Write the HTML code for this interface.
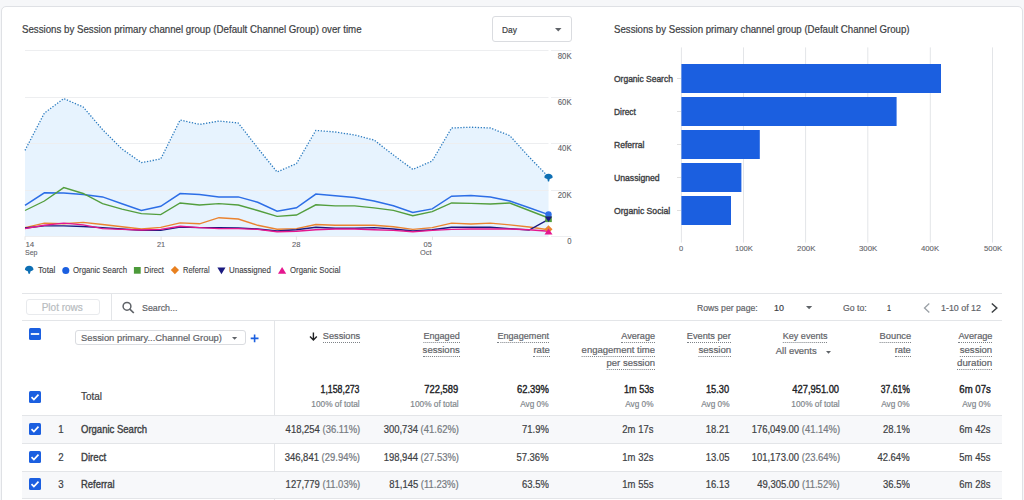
<!DOCTYPE html>
<html><head><meta charset="utf-8"><style>
html,body{margin:0;padding:0;width:1024px;height:500px;overflow:hidden;background:#f6f7f9;}
.t{position:absolute;white-space:nowrap;line-height:1;font-family:"Liberation Sans", sans-serif;-webkit-text-stroke:0.2px currentColor;}
.u{padding-bottom:1px;border-bottom:1px dotted #7d8287;}
</style></head><body>
<div style="position:absolute;left:1px;top:6px;width:1022px;height:514px;box-sizing:border-box;border:1px solid #dfe1e5;border-radius:5px;background:#fff;"></div><div class="t" style="left:21.70px;top:25.00px;font-size:10.2px;color:#3c4043;font-weight:400;transform:scaleX(0.9518);transform-origin:left 0;">Sessions by Session primary channel group (Default Channel Group) over time</div><div style="position:absolute;left:491.5px;top:16.3px;width:80.29999999999995px;height:26.2px;box-sizing:border-box;border:1px solid #dadce0;border-radius:3px;"></div><div class="t" style="left:502.00px;top:26.00px;font-size:9.1px;color:#3c4043;font-weight:400;transform:scaleX(0.9176);transform-origin:left 0;">Day</div><svg style="position:absolute;left:554.5px;top:27.8px" width="7" height="4"><path d="M0 0L6.5 0L3.25 3.6Z" fill="#5f6368"/></svg><svg style="position:absolute;left:0;top:0" width="1024" height="300"><polygon points="25.00,150.40 44.39,113.00 63.78,98.60 83.17,107.00 102.56,129.60 121.95,149.00 141.34,162.60 160.73,159.00 180.12,120.00 199.51,124.40 218.90,121.00 238.29,123.00 257.68,148.00 277.07,172.00 296.46,163.60 315.85,130.40 335.24,132.00 354.63,135.00 374.02,140.00 393.41,155.00 412.80,169.40 432.19,161.00 451.58,128.00 470.97,127.20 490.36,128.00 509.75,135.60 529.14,157.00 548.53,177.00 548.53,236.50 25.00,236.50" fill="#e7f3fe"/><line x1="25" y1="50.5" x2="548.5" y2="50.5" stroke="#edeef0" stroke-width="1"/><line x1="551" y1="50.5" x2="571.3" y2="50.5" stroke="#edeef0" stroke-width="1"/><line x1="25" y1="97.5" x2="548.5" y2="97.5" stroke="#edeef0" stroke-width="1"/><line x1="551" y1="97.5" x2="571.3" y2="97.5" stroke="#edeef0" stroke-width="1"/><line x1="25" y1="143.5" x2="548.5" y2="143.5" stroke="#edeef0" stroke-width="1"/><line x1="551" y1="143.5" x2="571.3" y2="143.5" stroke="#edeef0" stroke-width="1"/><line x1="25" y1="190.5" x2="548.5" y2="190.5" stroke="#edeef0" stroke-width="1"/><line x1="551" y1="190.5" x2="571.3" y2="190.5" stroke="#edeef0" stroke-width="1"/><line x1="25" y1="236.5" x2="548.5" y2="236.5" stroke="#edeef0" stroke-width="1"/><line x1="551" y1="236.5" x2="571.3" y2="236.5" stroke="#edeef0" stroke-width="1"/><line x1="25" y1="236.4" x2="25" y2="240" stroke="#e0e0e0" stroke-width="0.8"/><line x1="161.1" y1="236.4" x2="161.1" y2="240" stroke="#e0e0e0" stroke-width="0.8"/><line x1="296.4" y1="236.4" x2="296.4" y2="240" stroke="#e0e0e0" stroke-width="0.8"/><line x1="432.5" y1="236.4" x2="432.5" y2="240" stroke="#e0e0e0" stroke-width="0.8"/><polyline points="25.00,205.40 44.39,192.80 63.78,193.00 83.17,194.60 102.56,196.90 121.95,203.70 141.34,210.50 160.73,206.30 180.12,193.50 199.51,194.40 218.90,196.90 238.29,196.90 257.68,202.30 277.07,211.20 296.46,207.80 315.85,194.10 335.24,195.80 354.63,197.60 374.02,201.00 393.41,205.80 412.80,212.40 432.19,208.90 451.58,196.20 470.97,195.50 490.36,196.90 509.75,201.00 529.14,207.80 548.53,214.60" fill="none" stroke="#2d6ee6" stroke-width="1.5"/><polyline points="25.00,210.50 44.39,201.00 63.78,187.60 83.17,193.50 102.56,203.70 121.95,209.20 141.34,213.70 160.73,214.60 180.12,203.00 199.51,205.00 218.90,203.70 238.29,205.00 257.68,210.50 277.07,216.30 296.46,215.00 315.85,204.80 335.24,205.80 354.63,205.80 374.02,207.80 393.41,210.30 412.80,215.70 432.19,211.60 451.58,203.00 470.97,203.30 490.36,204.00 509.75,203.00 529.14,210.50 548.53,218.00" fill="none" stroke="#539e3e" stroke-width="1.35"/><polyline points="25.00,227.60 44.39,223.10 63.78,223.80 83.17,222.40 102.56,224.50 121.95,226.70 141.34,229.00 160.73,227.40 180.12,222.90 199.51,223.80 218.90,217.70 238.29,219.00 257.68,225.30 277.07,229.30 296.46,228.60 315.85,224.50 335.24,225.30 354.63,225.30 374.02,225.30 393.41,226.70 412.80,229.40 432.19,227.60 451.58,223.10 470.97,224.00 490.36,223.10 509.75,224.90 529.14,227.00 548.53,229.70" fill="none" stroke="#ea8330" stroke-width="1.4"/><polyline points="25.00,228.00 44.39,225.90 63.78,225.90 83.17,226.50 102.56,227.60 121.95,229.00 141.34,230.40 160.73,230.40 180.12,227.00 199.51,227.60 218.90,227.60 238.29,228.00 257.68,229.00 277.07,231.00 296.46,229.70 315.85,227.20 335.24,228.30 354.63,228.30 374.02,227.60 393.41,229.00 412.80,231.00 432.19,229.70 451.58,227.20 470.97,227.20 490.36,227.20 509.75,228.60 529.14,230.00 548.53,219.40" fill="none" stroke="#1b1a7e" stroke-width="1.4"/><polyline points="25.00,228.60 44.39,225.30 63.78,223.10 83.17,224.90 102.56,228.60 121.95,229.40 141.34,230.00 160.73,229.40 180.12,226.30 199.51,227.60 218.90,228.60 238.29,228.60 257.68,229.40 277.07,231.70 296.46,231.30 315.85,229.70 335.24,229.00 354.63,229.00 374.02,229.70 393.41,230.40 412.80,231.70 432.19,230.40 451.58,229.40 470.97,229.00 490.36,229.00 509.75,229.00 529.14,229.70 548.53,231.30" fill="none" stroke="#e5178f" stroke-width="1.4"/><polyline points="25.00,150.40 44.39,113.00 63.78,98.60 83.17,107.00 102.56,129.60 121.95,149.00 141.34,162.60 160.73,159.00 180.12,120.00 199.51,124.40 218.90,121.00 238.29,123.00 257.68,148.00 277.07,172.00 296.46,163.60 315.85,130.40 335.24,132.00 354.63,135.00 374.02,140.00 393.41,155.00 412.80,169.40 432.19,161.00 451.58,128.00 470.97,127.20 490.36,128.00 509.75,135.60 529.14,157.00 548.53,177.00" fill="none" stroke="#2b7bbf" stroke-width="1.3" stroke-dasharray="1.3 1.6"/><path d="M544.3299999999999,177.6 C544.3299999999999,175 546.3299999999999,173.8 548.53,173.8 C550.73,173.8 552.73,175 552.73,177.6 Q551.3299999999999,178.6 549.73,179.1 L549.13,181.4 L547.93,181.4 L547.3299999999999,179.1 Q545.73,178.6 544.3299999999999,177.6Z" fill="#0e6fb4"/><circle cx="548.53" cy="214.5" r="3.2" fill="#2d6ee6"/><rect x="545.23" y="216.5" width="6.6" height="5.6" fill="#539e3e"/><path d="M544.93,216.5 L552.13,216.5 L548.53,222 Z" fill="#1b1a7e"/><path d="M548.53,225.2 L552.53,229.2 L548.53,233.2 L544.53,229.2 Z" fill="#ea8330"/><path d="M548.53,228.6 L552.53,234.4 L544.53,234.4 Z" fill="#e5178f"/></svg><div class="t" style="right:452.40px;top:53.00px;font-size:8.2px;color:#5f6368;font-weight:400;-webkit-text-stroke:0.1px currentColor;transform:scaleX(0.9467);transform-origin:right 0;">80K</div><div class="t" style="right:452.40px;top:99.00px;font-size:8.2px;color:#5f6368;font-weight:400;-webkit-text-stroke:0.1px currentColor;transform:scaleX(0.9467);transform-origin:right 0;">60K</div><div class="t" style="right:452.40px;top:145.00px;font-size:8.2px;color:#5f6368;font-weight:400;-webkit-text-stroke:0.1px currentColor;transform:scaleX(0.9467);transform-origin:right 0;">40K</div><div class="t" style="right:452.40px;top:192.00px;font-size:8.2px;color:#5f6368;font-weight:400;-webkit-text-stroke:0.1px currentColor;transform:scaleX(0.9467);transform-origin:right 0;">20K</div><div class="t" style="right:452.41px;top:238.00px;font-size:8.2px;color:#5f6368;font-weight:400;-webkit-text-stroke:0.1px currentColor;transform:scaleX(0.9400);transform-origin:right 0;">0</div><div class="t" style="left:25.40px;top:241.00px;font-size:8.0px;color:#5f6368;font-weight:400;-webkit-text-stroke:0.1px currentColor;">14</div><div class="t" style="left:25.40px;top:249.00px;font-size:8.0px;color:#5f6368;font-weight:400;-webkit-text-stroke:0.1px currentColor;transform:scaleX(0.8800);transform-origin:left 0;">Sep</div><div class="t" style="left:156.95px;top:241.00px;font-size:8.0px;color:#5f6368;font-weight:400;-webkit-text-stroke:0.1px currentColor;transform:scaleX(0.9222);transform-origin:left 0;">21</div><div class="t" style="left:292.20px;top:241.00px;font-size:8.0px;color:#5f6368;font-weight:400;-webkit-text-stroke:0.1px currentColor;transform:scaleX(0.9333);transform-origin:left 0;">28</div><div class="t" style="right:591.99px;top:241.00px;font-size:8.0px;color:#5f6368;font-weight:400;-webkit-text-stroke:0.1px currentColor;transform:scaleX(0.9333);transform-origin:right 0;">05</div><div class="t" style="right:592.40px;top:249.00px;font-size:8.0px;color:#5f6368;font-weight:400;-webkit-text-stroke:0.1px currentColor;transform:scaleX(0.9231);transform-origin:right 0;">Oct</div><svg style="position:absolute;left:0;top:260px" width="300" height="20"><path d="M24.9,9.8 C24.9,7 27,5.8 29.2,5.8 C31.4,5.8 33.5,7 33.5,9.8 Q32,10.8 30.6,11.3 L29.9,13.8 L28.5,13.8 L27.8,11.3 Q26.4,10.8 24.9,9.8Z" fill="#0e6fb4"/><circle cx="65.8" cy="10.45" r="3.55" fill="#1b5fe0"/><rect x="133.9" y="7" width="6.8" height="6.7" fill="#4c9a3a"/><path d="M174.9,5.9 L179,10.05 L174.9,14.2 L170.8,10.05Z" fill="#e8801f"/><path d="M217.4,7.4 L225.5,7.4 L221.45,14.2Z" fill="#1a1a80"/><path d="M282.1,6.9 L286.2,13.75 L278,13.75Z" fill="#e5178f"/></svg><div class="t" style="left:37.50px;top:266.00px;font-size:8.5px;color:#3c4043;font-weight:400;-webkit-text-stroke:0.1px currentColor;transform:scaleX(0.9667);transform-origin:left 0;">Total</div><div class="t" style="left:73.00px;top:266.00px;font-size:8.5px;color:#3c4043;font-weight:400;-webkit-text-stroke:0.1px currentColor;transform:scaleX(0.9153);transform-origin:left 0;">Organic Search</div><div class="t" style="left:144.10px;top:266.00px;font-size:8.5px;color:#3c4043;font-weight:400;-webkit-text-stroke:0.1px currentColor;transform:scaleX(0.8913);transform-origin:left 0;">Direct</div><div class="t" style="left:182.70px;top:266.00px;font-size:8.5px;color:#3c4043;font-weight:400;-webkit-text-stroke:0.1px currentColor;transform:scaleX(0.8806);transform-origin:left 0;">Referral</div><div class="t" style="left:229.00px;top:266.00px;font-size:8.5px;color:#3c4043;font-weight:400;-webkit-text-stroke:0.1px currentColor;transform:scaleX(0.9333);transform-origin:left 0;">Unassigned</div><div class="t" style="left:289.80px;top:266.00px;font-size:8.5px;color:#3c4043;font-weight:400;-webkit-text-stroke:0.1px currentColor;transform:scaleX(0.9143);transform-origin:left 0;">Organic Social</div><div class="t" style="left:613.80px;top:25.00px;font-size:10.2px;color:#3c4043;font-weight:400;transform:scaleX(0.9471);transform-origin:left 0;">Sessions by Session primary channel group (Default Channel Group)</div><svg style="position:absolute;left:0;top:0" width="1024" height="300"><line x1="681.4" y1="47.4" x2="681.4" y2="242.6" stroke="#e3e5e8" stroke-width="1"/><line x1="743.5" y1="47.4" x2="743.5" y2="242.6" stroke="#e3e5e8" stroke-width="1"/><line x1="805.6" y1="47.4" x2="805.6" y2="242.6" stroke="#e3e5e8" stroke-width="1"/><line x1="867.8" y1="47.4" x2="867.8" y2="242.6" stroke="#e3e5e8" stroke-width="1"/><line x1="930.3" y1="47.4" x2="930.3" y2="242.6" stroke="#e3e5e8" stroke-width="1"/><line x1="992.5" y1="47.4" x2="992.5" y2="242.6" stroke="#e3e5e8" stroke-width="1"/><rect x="681.4" y="64" width="259.6" height="29" fill="#1b5fe0"/><line x1="677" y1="78.5" x2="681" y2="78.5" stroke="#e0e0e0" stroke-width="1"/><rect x="681.4" y="97" width="215.2" height="29" fill="#1b5fe0"/><line x1="677" y1="111.5" x2="681" y2="111.5" stroke="#e0e0e0" stroke-width="1"/><rect x="681.4" y="130" width="78.4" height="29" fill="#1b5fe0"/><line x1="677" y1="144.5" x2="681" y2="144.5" stroke="#e0e0e0" stroke-width="1"/><rect x="681.4" y="163" width="60.0" height="29" fill="#1b5fe0"/><line x1="677" y1="177.5" x2="681" y2="177.5" stroke="#e0e0e0" stroke-width="1"/><rect x="681.4" y="196" width="49.6" height="29" fill="#1b5fe0"/><line x1="677" y1="210.5" x2="681" y2="210.5" stroke="#e0e0e0" stroke-width="1"/></svg><div class="t" style="left:613.80px;top:75.00px;font-size:8.9px;color:#3c4043;font-weight:400;-webkit-text-stroke:0.36px currentColor;transform:scaleX(0.9548);transform-origin:left 0;">Organic Search</div><div class="t" style="left:613.80px;top:108.00px;font-size:8.9px;color:#3c4043;font-weight:400;-webkit-text-stroke:0.36px currentColor;transform:scaleX(0.9417);transform-origin:left 0;">Direct</div><div class="t" style="left:613.80px;top:141.00px;font-size:8.9px;color:#3c4043;font-weight:400;-webkit-text-stroke:0.36px currentColor;transform:scaleX(0.9625);transform-origin:left 0;">Referral</div><div class="t" style="left:613.80px;top:174.00px;font-size:8.9px;color:#3c4043;font-weight:400;-webkit-text-stroke:0.36px currentColor;transform:scaleX(0.9745);transform-origin:left 0;">Unassigned</div><div class="t" style="left:613.80px;top:207.00px;font-size:8.9px;color:#3c4043;font-weight:400;-webkit-text-stroke:0.36px currentColor;transform:scaleX(0.9724);transform-origin:left 0;">Organic Social</div><div class="t" style="left:679.35px;top:245.00px;font-size:8.0px;color:#5f6368;font-weight:400;-webkit-text-stroke:0.1px currentColor;transform:scaleX(0.9400);transform-origin:left 0;">0</div><div class="t" style="left:734.65px;top:245.00px;font-size:8.0px;color:#5f6368;font-weight:400;-webkit-text-stroke:0.1px currentColor;transform:scaleX(0.9632);transform-origin:left 0;">100K</div><div class="t" style="left:796.55px;top:245.00px;font-size:8.0px;color:#5f6368;font-weight:400;-webkit-text-stroke:0.1px currentColor;transform:scaleX(0.9842);transform-origin:left 0;">200K</div><div class="t" style="left:858.80px;top:245.00px;font-size:8.0px;color:#5f6368;font-weight:400;-webkit-text-stroke:0.1px currentColor;transform:scaleX(0.9789);transform-origin:left 0;">300K</div><div class="t" style="left:921.40px;top:245.00px;font-size:8.0px;color:#5f6368;font-weight:400;-webkit-text-stroke:0.1px currentColor;transform:scaleX(0.9684);transform-origin:left 0;">400K</div><div class="t" style="left:983.55px;top:245.00px;font-size:8.0px;color:#5f6368;font-weight:400;-webkit-text-stroke:0.1px currentColor;transform:scaleX(0.9737);transform-origin:left 0;">500K</div><div style="position:absolute;left:21.5px;top:293px;width:980.5px;height:1px;background:#e3e5e8;"></div><div style="position:absolute;left:21.5px;top:320px;width:980.5px;height:1px;background:#e3e5e8;"></div><div style="position:absolute;left:110.5px;top:293px;width:1.0px;height:27px;background:#e3e5e8;"></div><div style="position:absolute;left:25.5px;top:299.4px;width:74.2px;height:16.0px;box-sizing:border-box;border:1px solid #e8eaed;border-radius:3px;"></div><div class="t" style="left:41.70px;top:303.00px;font-size:10.0px;color:#b8bcc0;font-weight:400;">Plot rows</div><svg style="position:absolute;left:121px;top:301px" width="15" height="13"><circle cx="6" cy="5.3" r="3.9" fill="none" stroke="#5f6368" stroke-width="1.5"/><line x1="8.8" y1="8.2" x2="12.8" y2="12" stroke="#5f6368" stroke-width="1.7"/></svg><div class="t" style="left:142.00px;top:303.00px;font-size:9.6px;color:#5f6368;font-weight:400;transform:scaleX(0.9211);transform-origin:left 0;">Search...</div><div class="t" style="left:696.70px;top:304.00px;font-size:9.3px;color:#5f6368;font-weight:400;transform:scaleX(0.9323);transform-origin:left 0;">Rows per page:</div><div class="t" style="left:774.00px;top:303.00px;font-size:9.6px;color:#3c4043;font-weight:400;transform:scaleX(0.9273);transform-origin:left 0;">10</div><svg style="position:absolute;left:806px;top:306px" width="7" height="4"><path d="M0 0L6.2 0L3.1 3.2Z" fill="#5f6368"/></svg><div class="t" style="left:842.60px;top:304.00px;font-size:9.3px;color:#5f6368;font-weight:400;transform:scaleX(0.9360);transform-origin:left 0;">Go to:</div><div class="t" style="left:886.60px;top:303.00px;font-size:9.6px;color:#3c4043;font-weight:400;transform:scaleX(0.7600);transform-origin:left 0;">1</div><svg style="position:absolute;left:920px;top:302px" width="82" height="12"><path d="M9.3,1.5 L4.5,6 L9.3,10.5" fill="none" stroke="#9aa0a6" stroke-width="1.3"/><path d="M71.8,1.5 L76.8,6 L71.8,10.5" fill="none" stroke="#3c4043" stroke-width="1.5"/></svg><div class="t" style="left:940.50px;top:304.00px;font-size:9.3px;color:#5f6368;font-weight:400;transform:scaleX(0.9548);transform-origin:left 0;">1-10 of 12</div><div style="position:absolute;left:274px;top:320px;width:1px;height:180px;background:#e3e5e8;"></div><div style="position:absolute;left:21.5px;top:415.4px;width:980.5px;height:27.900000000000034px;background:#f7f8fa;"></div><div style="position:absolute;left:21.5px;top:470.7px;width:980.5px;height:27.5px;background:#f7f8fa;"></div><div style="position:absolute;left:21.5px;top:415.4px;width:980.5px;height:1.0px;background:#e3e5e8;"></div><div style="position:absolute;left:21.5px;top:443.3px;width:980.5px;height:1.0px;background:#e3e5e8;"></div><div style="position:absolute;left:21.5px;top:470.7px;width:980.5px;height:1.0px;background:#e3e5e8;"></div><div style="position:absolute;left:21.5px;top:498.2px;width:980.5px;height:1.0px;background:#e3e5e8;"></div><svg style="position:absolute;left:29px;top:328.4px" width="12" height="12"><rect x="0" y="0" width="12" height="12" rx="1.5" fill="#1b5fe0"/><rect x="1.8" y="5.1" width="8.4" height="1.8" fill="#fff"/></svg><div style="position:absolute;left:74.6px;top:330.2px;width:171.4px;height:15.199999999999989px;box-sizing:border-box;border:1px solid #dadce0;border-radius:3px;"></div><div class="t" style="left:81.00px;top:333.00px;font-size:9.6px;color:#5f6368;font-weight:400;transform:scaleX(0.9766);transform-origin:left 0;">Session primary...Channel Group)</div><svg style="position:absolute;left:231.5px;top:336.5px" width="6" height="4"><path d="M0 0L5.2 0L2.6 2.8Z" fill="#5f6368"/></svg><svg style="position:absolute;left:250px;top:333.5px" width="10" height="9"><path d="M4.6,0.5 V8.3 M0.7,4.4 H8.5" stroke="#1b5fe0" stroke-width="1.6"/></svg><div class="t" style="right:663.92px;top:332.00px;font-size:9.2px;color:#5f6368;font-weight:400;"><span class="u">Sessions</span></div><svg style="position:absolute;left:309px;top:331.5px" width="9" height="9"><path d="M4.4,0.5 V7.8 M1,4.6 L4.4,8 L7.8,4.6" fill="none" stroke="#202124" stroke-width="1.4"/></svg><div class="t" style="right:564.40px;top:332.00px;font-size:9.2px;color:#5f6368;font-weight:400;transform:scaleX(0.9892);transform-origin:right 0;"><span class="u">Engaged</span></div><div class="t" style="right:564.46px;top:346.00px;font-size:9.2px;color:#5f6368;font-weight:400;transform:scaleX(1.0389);transform-origin:right 0;"><span class="u">sessions</span></div><div class="t" style="right:475.08px;top:332.00px;font-size:9.2px;color:#5f6368;font-weight:400;transform:scaleX(0.9925);transform-origin:right 0;"><span class="u">Engagement</span></div><div class="t" style="right:474.36px;top:346.00px;font-size:9.2px;color:#5f6368;font-weight:400;transform:scaleX(1.0375);transform-origin:right 0;"><span class="u">rate</span></div><div class="t" style="right:368.74px;top:332.00px;font-size:9.2px;color:#5f6368;font-weight:400;transform:scaleX(0.9941);transform-origin:right 0;"><span class="u">Average</span></div><div class="t" style="right:368.80px;top:346.00px;font-size:9.2px;color:#5f6368;font-weight:400;transform:scaleX(1.0338);transform-origin:right 0;"><span class="u">engagement time</span></div><div class="t" style="right:368.82px;top:359.00px;font-size:9.2px;color:#5f6368;font-weight:400;transform:scaleX(1.0298);transform-origin:right 0;"><span class="u">per session</span></div><div class="t" style="right:293.28px;top:332.00px;font-size:9.2px;color:#5f6368;font-weight:400;"><span class="u">Events per</span></div><div class="t" style="right:293.04px;top:346.00px;font-size:9.2px;color:#5f6368;font-weight:400;transform:scaleX(1.0516);transform-origin:right 0;"><span class="u">session</span></div><div class="t" style="right:196.14px;top:332.00px;font-size:9.2px;color:#5f6368;font-weight:400;transform:scaleX(0.9826);transform-origin:right 0;"><span class="u">Key events</span></div><div class="t" style="right:207.75px;top:346.00px;font-size:9.4px;color:#5f6368;font-weight:400;transform:scaleX(1.0049);transform-origin:right 0;">All events</div><svg style="position:absolute;left:826.3px;top:351px" width="6" height="4"><path d="M0 0L5 0L2.5 2.8Z" fill="#5f6368"/></svg><div class="t" style="right:113.03px;top:332.00px;font-size:9.2px;color:#5f6368;font-weight:400;transform:scaleX(1.0129);transform-origin:right 0;"><span class="u">Bounce</span></div><div class="t" style="right:113.36px;top:346.00px;font-size:9.2px;color:#5f6368;font-weight:400;transform:scaleX(1.0200);transform-origin:right 0;"><span class="u">rate</span></div><div class="t" style="right:31.54px;top:332.00px;font-size:9.2px;color:#5f6368;font-weight:400;"><span class="u">Average</span></div><div class="t" style="right:31.44px;top:346.00px;font-size:9.2px;color:#5f6368;font-weight:400;transform:scaleX(1.0387);transform-origin:right 0;"><span class="u">session</span></div><div class="t" style="right:31.38px;top:359.00px;font-size:9.2px;color:#5f6368;font-weight:400;transform:scaleX(1.0606);transform-origin:right 0;"><span class="u">duration</span></div><svg style="position:absolute;left:29px;top:390.6px" width="12" height="12"><rect x="0" y="0" width="12" height="12" rx="1.5" fill="#1b5fe0"/><path d="M2.5,6.1 L4.9,8.5 L9.5,3.7" fill="none" stroke="#fff" stroke-width="1.7"/></svg><div class="t" style="left:81.00px;top:392.00px;font-size:10.2px;color:#3c4043;font-weight:400;transform:scaleX(0.9773);transform-origin:left 0;">Total</div><div class="t" style="right:664.44px;top:385.00px;font-size:10.0px;color:#202124;font-weight:400;-webkit-text-stroke:0.36px currentColor;transform:scaleX(0.8756);transform-origin:right 0;">1,158,273</div><div class="t" style="right:664.32px;top:400.00px;font-size:9.2px;color:#80868b;font-weight:400;transform:scaleX(0.9000);transform-origin:right 0;">100% of total</div><div class="t" style="right:565.79px;top:385.00px;font-size:10.0px;color:#202124;font-weight:400;-webkit-text-stroke:0.36px currentColor;transform:scaleX(0.9351);transform-origin:right 0;">722,589</div><div class="t" style="right:565.32px;top:400.00px;font-size:9.2px;color:#80868b;font-weight:400;transform:scaleX(0.9000);transform-origin:right 0;">100% of total</div><div class="t" style="right:475.07px;top:385.00px;font-size:10.0px;color:#202124;font-weight:400;-webkit-text-stroke:0.36px currentColor;transform:scaleX(0.9412);transform-origin:right 0;">62.39%</div><div class="t" style="right:475.45px;top:400.00px;font-size:9.2px;color:#80868b;font-weight:400;transform:scaleX(0.9000);transform-origin:right 0;">Avg 0%</div><div class="t" style="right:369.78px;top:385.00px;font-size:10.0px;color:#202124;font-weight:400;-webkit-text-stroke:0.36px currentColor;transform:scaleX(0.9091);transform-origin:right 0;">1m 53s</div><div class="t" style="right:370.05px;top:400.00px;font-size:9.2px;color:#80868b;font-weight:400;transform:scaleX(0.9000);transform-origin:right 0;">Avg 0%</div><div class="t" style="right:294.89px;top:385.00px;font-size:10.0px;color:#202124;font-weight:400;-webkit-text-stroke:0.36px currentColor;transform:scaleX(0.9231);transform-origin:right 0;">15.30</div><div class="t" style="right:294.45px;top:400.00px;font-size:9.2px;color:#80868b;font-weight:400;transform:scaleX(0.9000);transform-origin:right 0;">Avg 0%</div><div class="t" style="right:185.08px;top:385.00px;font-size:10.0px;color:#202124;font-weight:400;-webkit-text-stroke:0.36px currentColor;transform:scaleX(0.9333);transform-origin:right 0;">427,951.00</div><div class="t" style="right:184.52px;top:400.00px;font-size:9.2px;color:#80868b;font-weight:400;transform:scaleX(0.9000);transform-origin:right 0;">100% of total</div><div class="t" style="right:114.07px;top:385.00px;font-size:10.0px;color:#202124;font-weight:400;-webkit-text-stroke:0.36px currentColor;transform:scaleX(0.8588);transform-origin:right 0;">37.61%</div><div class="t" style="right:114.45px;top:400.00px;font-size:9.2px;color:#80868b;font-weight:400;transform:scaleX(0.9000);transform-origin:right 0;">Avg 0%</div><div class="t" style="right:32.80px;top:385.00px;font-size:10.0px;color:#202124;font-weight:400;-webkit-text-stroke:0.36px currentColor;transform:scaleX(0.9606);transform-origin:right 0;">6m 07s</div><div class="t" style="right:33.05px;top:400.00px;font-size:9.2px;color:#80868b;font-weight:400;transform:scaleX(0.9000);transform-origin:right 0;">Avg 0%</div><svg style="position:absolute;left:29px;top:423.1px" width="12" height="12"><rect x="0" y="0" width="12" height="12" rx="1.5" fill="#1b5fe0"/><path d="M2.5,6.1 L4.9,8.5 L9.5,3.7" fill="none" stroke="#fff" stroke-width="1.7"/></svg><div class="t" style="right:960.41px;top:425.00px;font-size:10.2px;color:#3c4043;font-weight:400;transform:scaleX(0.9500);transform-origin:right 0;">1</div><div class="t" style="left:81.00px;top:425.00px;font-size:10.2px;color:#3c4043;font-weight:400;-webkit-text-stroke:0.36px currentColor;transform:scaleX(0.9338);transform-origin:left 0;">Organic Search</div><div class="t" style="right:663.77px;top:425.00px;font-size:10.2px;color:#3c4043;font-weight:400;transform:scaleX(0.9300);transform-origin:right 0;">418,254 <span style="color:#757a7f">(36.11%)</span></div><div class="t" style="right:565.00px;top:425.00px;font-size:10.2px;color:#3c4043;font-weight:400;transform:scaleX(0.9300);transform-origin:right 0;">300,734 <span style="color:#757a7f">(41.62%)</span></div><div class="t" style="right:475.10px;top:425.00px;font-size:10.2px;color:#3c4043;font-weight:400;transform:scaleX(0.9300);transform-origin:right 0;">71.9%</div><div class="t" style="right:370.14px;top:425.00px;font-size:10.2px;color:#3c4043;font-weight:400;transform:scaleX(0.9300);transform-origin:right 0;">2m 17s</div><div class="t" style="right:294.47px;top:425.00px;font-size:10.2px;color:#3c4043;font-weight:400;transform:scaleX(0.9300);transform-origin:right 0;">18.21</div><div class="t" style="right:184.04px;top:425.00px;font-size:10.2px;color:#3c4043;font-weight:400;transform:scaleX(0.9300);transform-origin:right 0;">176,049.00 <span style="color:#757a7f">(41.14%)</span></div><div class="t" style="right:114.10px;top:425.00px;font-size:10.2px;color:#3c4043;font-weight:400;transform:scaleX(0.9300);transform-origin:right 0;">28.1%</div><div class="t" style="right:33.14px;top:425.00px;font-size:10.2px;color:#3c4043;font-weight:400;transform:scaleX(0.9300);transform-origin:right 0;">6m 42s</div><svg style="position:absolute;left:29px;top:451.0px" width="12" height="12"><rect x="0" y="0" width="12" height="12" rx="1.5" fill="#1b5fe0"/><path d="M2.5,6.1 L4.9,8.5 L9.5,3.7" fill="none" stroke="#fff" stroke-width="1.7"/></svg><div class="t" style="right:960.41px;top:453.00px;font-size:10.2px;color:#3c4043;font-weight:400;transform:scaleX(0.9500);transform-origin:right 0;">2</div><div class="t" style="left:81.00px;top:453.00px;font-size:10.2px;color:#3c4043;font-weight:400;-webkit-text-stroke:0.36px currentColor;transform:scaleX(0.9444);transform-origin:left 0;">Direct</div><div class="t" style="right:664.00px;top:453.00px;font-size:10.2px;color:#3c4043;font-weight:400;transform:scaleX(0.9300);transform-origin:right 0;">346,841 <span style="color:#757a7f">(29.94%)</span></div><div class="t" style="right:565.00px;top:453.00px;font-size:10.2px;color:#3c4043;font-weight:400;transform:scaleX(0.9300);transform-origin:right 0;">198,944 <span style="color:#757a7f">(27.53%)</span></div><div class="t" style="right:475.41px;top:453.00px;font-size:10.2px;color:#3c4043;font-weight:400;transform:scaleX(0.9300);transform-origin:right 0;">57.36%</div><div class="t" style="right:370.14px;top:453.00px;font-size:10.2px;color:#3c4043;font-weight:400;transform:scaleX(0.9300);transform-origin:right 0;">1m 32s</div><div class="t" style="right:294.47px;top:453.00px;font-size:10.2px;color:#3c4043;font-weight:400;transform:scaleX(0.9300);transform-origin:right 0;">13.05</div><div class="t" style="right:184.04px;top:453.00px;font-size:10.2px;color:#3c4043;font-weight:400;transform:scaleX(0.9300);transform-origin:right 0;">101,173.00 <span style="color:#757a7f">(23.64%)</span></div><div class="t" style="right:114.41px;top:453.00px;font-size:10.2px;color:#3c4043;font-weight:400;transform:scaleX(0.9300);transform-origin:right 0;">42.64%</div><div class="t" style="right:33.14px;top:453.00px;font-size:10.2px;color:#3c4043;font-weight:400;transform:scaleX(0.9300);transform-origin:right 0;">5m 45s</div><svg style="position:absolute;left:29px;top:478.3px" width="12" height="12"><rect x="0" y="0" width="12" height="12" rx="1.5" fill="#1b5fe0"/><path d="M2.5,6.1 L4.9,8.5 L9.5,3.7" fill="none" stroke="#fff" stroke-width="1.7"/></svg><div class="t" style="right:960.41px;top:480.00px;font-size:10.2px;color:#3c4043;font-weight:400;transform:scaleX(0.9500);transform-origin:right 0;">3</div><div class="t" style="left:81.00px;top:480.00px;font-size:10.2px;color:#3c4043;font-weight:400;-webkit-text-stroke:0.36px currentColor;transform:scaleX(0.9270);transform-origin:left 0;">Referral</div><div class="t" style="right:663.77px;top:480.00px;font-size:10.2px;color:#3c4043;font-weight:400;transform:scaleX(0.9300);transform-origin:right 0;">127,779 <span style="color:#757a7f">(11.03%)</span></div><div class="t" style="right:565.38px;top:480.00px;font-size:10.2px;color:#3c4043;font-weight:400;transform:scaleX(0.9300);transform-origin:right 0;">81,145 <span style="color:#757a7f">(11.23%)</span></div><div class="t" style="right:475.10px;top:480.00px;font-size:10.2px;color:#3c4043;font-weight:400;transform:scaleX(0.9300);transform-origin:right 0;">63.5%</div><div class="t" style="right:370.14px;top:480.00px;font-size:10.2px;color:#3c4043;font-weight:400;transform:scaleX(0.9300);transform-origin:right 0;">1m 55s</div><div class="t" style="right:294.47px;top:480.00px;font-size:10.2px;color:#3c4043;font-weight:400;transform:scaleX(0.9300);transform-origin:right 0;">16.13</div><div class="t" style="right:184.43px;top:480.00px;font-size:10.2px;color:#3c4043;font-weight:400;transform:scaleX(0.9300);transform-origin:right 0;">49,305.00 <span style="color:#757a7f">(11.52%)</span></div><div class="t" style="right:114.10px;top:480.00px;font-size:10.2px;color:#3c4043;font-weight:400;transform:scaleX(0.9300);transform-origin:right 0;">36.5%</div><div class="t" style="right:33.14px;top:480.00px;font-size:10.2px;color:#3c4043;font-weight:400;transform:scaleX(0.9300);transform-origin:right 0;">6m 28s</div>
</body></html>
